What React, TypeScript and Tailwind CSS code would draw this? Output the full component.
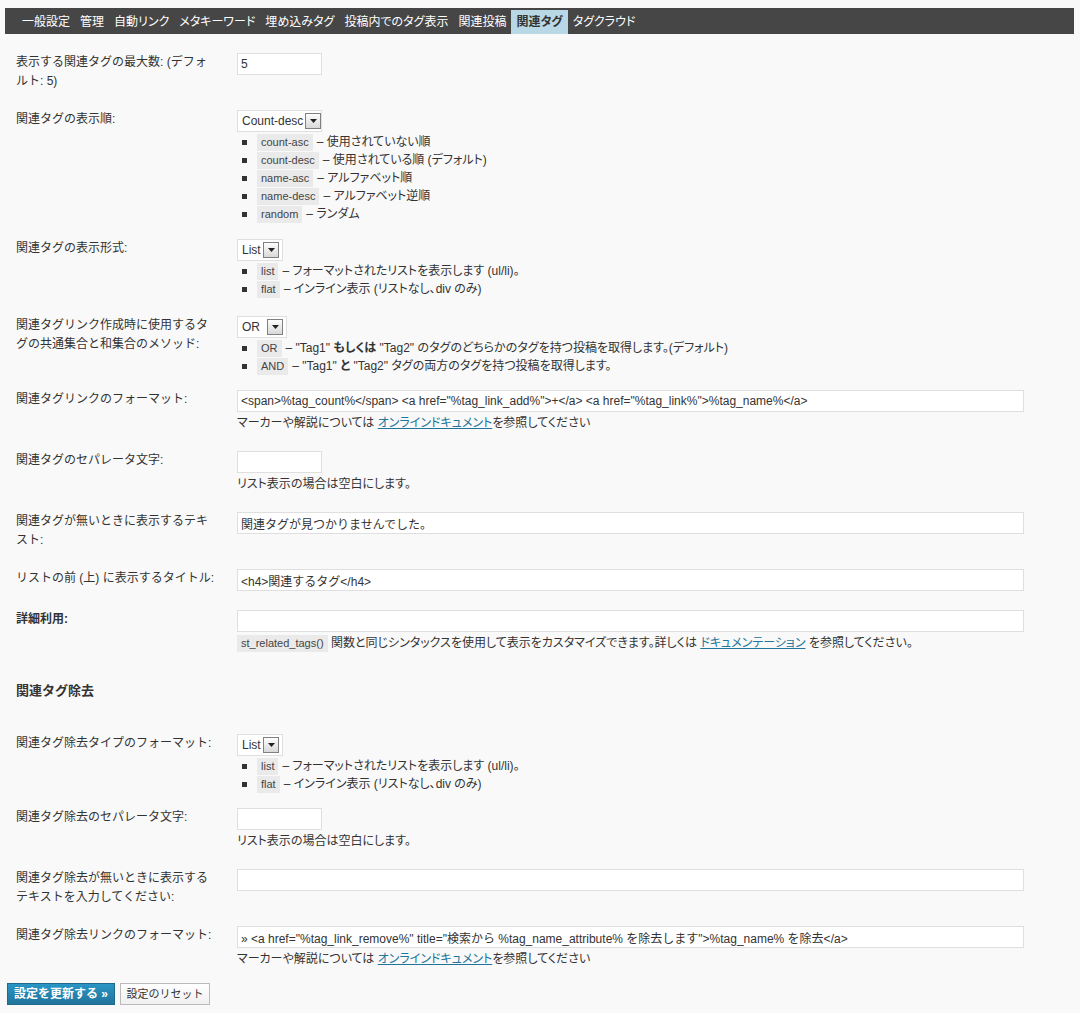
import React from "react";

const tabs = ["一般設定", "管理", "自動リンク", "メタキーワード", "埋め込みタグ", "投稿内でのタグ表示", "関連投稿", "関連タグ", "タグクラウド"];

function Row({ label, bold, pb, children }: { label: React.ReactNode; bold?: boolean; pb: string; children: React.ReactNode }) {
  return (
    <div className={`flex pt-[10px] ${pb}`}>
      <div className={`w-[232px] shrink-0 pl-[11px] pr-[19.5px] leading-[19px] ${bold ? "font-bold" : ""}`}>{label}</div>
      <div className="flex-1 min-w-0">{children}</div>
    </div>
  );
}

function Input({ value = "", w = "w-[787px]" }: { value?: string; w?: string }) {
  return (
    <input
      readOnly
      value={value}
      className={`block h-[22px] ${w} border border-[#dfdfdf] bg-white px-[3px] text-[12px] text-[#333] outline-none`}
    />
  );
}

function Select({ value, w }: { value: string; w: string }) {
  return (
    <div className={`flex h-[22px] ${w} items-center justify-between gap-[2px] whitespace-nowrap border border-[#dfdfdf] bg-white pl-[4px] pr-[3px]`}>
      <span className="leading-[20px]">{value}</span>
      <span className="flex h-[16px] w-[16px] shrink-0 items-center justify-center border border-[#808080] bg-linear-to-b from-[#fdfdfd] to-[#d9d9d9]">
        <svg width="7" height="4" viewBox="0 0 7 4">
          <path d="M0 0 L7 0 L3.5 4 Z" fill="#222" />
        </svg>
      </span>
    </div>
  );
}

function Code({ children }: { children: React.ReactNode }) {
  return (
    <code className="inline-block h-[17px] bg-[#eaeaea] px-[4px] font-['Liberation_Sans',sans-serif] text-[11px] leading-[17px] text-[#444]">
      {children}
    </code>
  );
}

function Item({ code, children }: { code: string; children: React.ReactNode }) {
  return (
    <li className="flex h-[18px] items-center whitespace-nowrap">
      <span className="ml-[5px] mr-[10px] inline-block h-[5px] w-[5px] bg-[#333]" />
      <Code>{code}</Code>
      <span className="ml-[4px] [font-feature-settings:'palt']">{children}</span>
    </li>
  );
}

function Help({ children }: { children: React.ReactNode }) {
  return <div className="mt-[2px] leading-[18px] whitespace-nowrap [font-feature-settings:'palt']">{children}</div>;
}

function Link({ children }: { children: React.ReactNode }) {
  return <a className="text-[#21759b] underline cursor-pointer">{children}</a>;
}

export default function App() {
  return (
    <div className="min-h-[1013px] bg-[#f9f9f9] pt-[8px] pl-[5px] pr-[6px] font-['Liberation_Sans','Noto_Sans_CJK_JP',sans-serif] text-[12px] text-[#333]">
      <div className="flex h-[26px] items-end bg-[#464646] pl-[12px] [font-feature-settings:'palt']">
        {tabs.map((t) => (
          <span
            key={t}
            className={
              t === "関連タグ"
                ? "h-[24px] px-[5px] leading-[24px] bg-[#b9d8e6] text-[#333] font-bold"
                : "h-[24px] px-[5px] leading-[24px] text-white"
            }
          >
            {t}
          </span>
        ))}
      </div>

      <div className="mt-[9px]">
        <Row label="表示する関連タグの最大数: (デフォルト: 5)" pb="pb-[9px]">
          <Input value="5" w="w-[85px]" />
        </Row>

        <Row label="関連タグの表示順:" pb="pb-[6px]">
          <Select value="Count-desc" w="w-[85px]" />
          <ul className="mt-[1px]">
            <Item code="count-asc">– 使用されていない順</Item>
            <Item code="count-desc">– 使用されている順 (デフォルト)</Item>
            <Item code="name-asc">– アルファベット順</Item>
            <Item code="name-desc">– アルファベット逆順</Item>
            <Item code="random">– ランダム</Item>
          </ul>
        </Row>

        <Row label="関連タグの表示形式:" pb="pb-[8px]">
          <Select value="List" w="w-[46px]" />
          <ul className="mt-[1px]">
            <Item code="list">– フォーマットされたリストを表示します (ul/li)。</Item>
            <Item code="flat">– インライン表示 (リストなし、div のみ)</Item>
          </ul>
        </Row>

        <Row
          label={
            <>
              関連タグリンク作成時に使用するタ
              <br />
              グの共通集合と和集合のメソッド:
            </>
          }
          pb="pb-[5px]"
        >
          <Select value="OR" w="w-[50px]" />
          <ul className="mt-[1px]">
            <Item code="OR">
              – "Tag1" <b>もしくは</b> "Tag2" のタグのどちらかのタグを持つ投稿を取得します。(デフォルト)
            </Item>
            <Item code="AND">
              – "Tag1" <b>と</b> "Tag2" タグの両方のタグを持つ投稿を取得します。
            </Item>
          </ul>
        </Row>

        <Row label="関連タグリンクのフォーマット:" pb="pb-[9px]">
          <Input value={'<span>%tag_count%</span> <a href="%tag_link_add%">+</a> <a href="%tag_link%">%tag_name%</a>'} />
          <Help>
            マーカーや解説については <Link>オンラインドキュメント</Link>を参照してください
          </Help>
        </Row>

        <Row label="関連タグのセパレータ文字:" pb="pb-[9px]">
          <Input w="w-[85px]" />
          <Help>リスト表示の場合は空白にします。</Help>
        </Row>

        <Row label="関連タグが無いときに表示するテキスト:" pb="pb-[9px]">
          <Input value="関連タグが見つかりませんでした。" />
        </Row>

        <Row label="リストの前 (上) に表示するタイトル:" pb="pb-[9px]">
          <Input value="<h4>関連するタグ</h4>" />
        </Row>

        <Row label="詳細利用:" bold pb="pb-[9px]">
          <Input />
          <Help>
            <Code>st_related_tags()</Code> 関数と同じシンタックスを使用して表示をカスタマイズできます。詳しくは <Link>ドキュメンテーション</Link> を参照してください。
          </Help>
        </Row>

        <h3 className="mt-[20px] mb-[23px] pl-[11px] text-[13px] font-bold leading-[20px] text-[#333]">関連タグ除去</h3>

        <Row label="関連タグ除去タイプのフォーマット:" pb="pb-[5px]">
          <Select value="List" w="w-[46px]" />
          <ul className="mt-[1px]">
            <Item code="list">– フォーマットされたリストを表示します (ul/li)。</Item>
            <Item code="flat">– インライン表示 (リストなし、div のみ)</Item>
          </ul>
        </Row>

        <Row label="関連タグ除去のセパレータ文字:" pb="pb-[9px]">
          <Input w="w-[85px]" />
          <Help>リスト表示の場合は空白にします。</Help>
        </Row>

        <Row label="関連タグ除去が無いときに表示するテキストを入力してください:" pb="pb-[9px]">
          <Input />
        </Row>

        <Row label="関連タグ除去リンクのフォーマット:" pb="pb-[9px]">
          <Input value={'» <a href="%tag_link_remove%" title="検索から %tag_name_attribute% を除去します">%tag_name% を除去</a>'} />
          <Help>
            マーカーや解説については <Link>オンラインドキュメント</Link>を参照してください
          </Help>
        </Row>
      </div>

      <div className="mt-[6px] flex gap-[5px] pl-[2px]">
        <button className="h-[22px] w-[108px] border border-[#1e6a8d] bg-linear-to-b from-[#2a95c5] to-[#21759b] text-[12px] font-bold text-white">
          設定を更新する »
        </button>
        <button className="h-[22px] w-[90px] border border-[#bbbbbb] bg-linear-to-b from-[#ffffff] to-[#f0f0f0] text-[11px] text-[#333]">
          設定のリセット
        </button>
      </div>
    </div>
  );
}
